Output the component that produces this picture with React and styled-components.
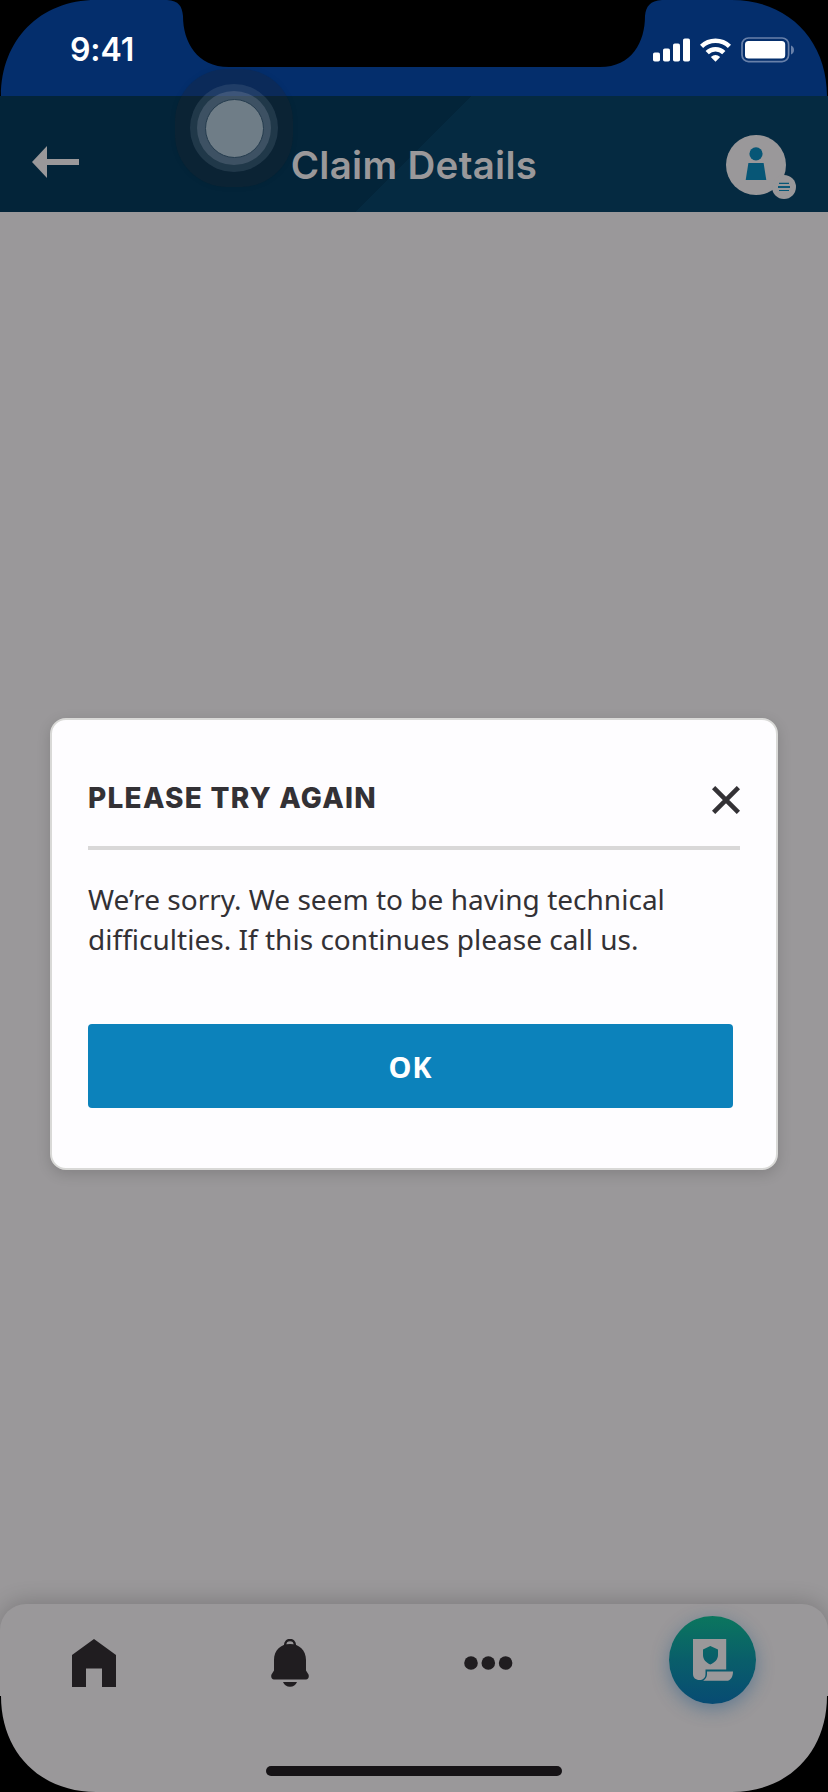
import React from "react";
import styled, { createGlobalStyle } from "styled-components";

const GlobalStyle = createGlobalStyle`
  *, *::before, *::after { box-sizing: border-box; }
  body { margin: 0; background: #000; }
  button { border: 0; padding: 0; background: none; font: inherit; cursor: pointer; }
  svg { display: block; }
`;

const dim = "#9a989a";
const ink = "#201d20";

const Screen = styled.div`
  position: relative;
  display: flex;
  flex-direction: column;
  width: 828px;
  height: 1792px;
  overflow: hidden;
  background: ${dim};
  font-family: "Noto Sans", sans-serif;
`;

const StatusBar = styled.div`
  display: flex;
  align-items: center;
  justify-content: space-between;
  height: 96px;
  padding: 3px 34px 0 70px;
  background: #042e6c;
  color: #fff;
`;

const Clock = styled.span`
  font-family: Inter, sans-serif;
  font-size: 32px;
  font-weight: 600;
  line-height: 40px;
  letter-spacing: -0.1px;
`;

const StatusIcons = styled.div`
  display: flex;
  align-items: center;
  gap: 10px;
`;

const Header = styled.header`
  display: grid;
  grid-template-columns: 1fr auto 1fr;
  align-items: center;
  height: 116px;
  padding: 18px 32px 0;
  background: linear-gradient(135deg, #032439 50%, #052a41 50%);
`;

const Title = styled.h1`
  margin: 4px 0 0;
  font-family: Inter, sans-serif;
  font-size: 38.5px;
  font-weight: 600;
  line-height: 46px;
  letter-spacing: 0.3px;
  color: ${dim};
`;

const BackButton = styled.button`
  justify-self: start;
  margin-bottom: 2px;
`;

const ProfileButton = styled.button`
  justify-self: end;
  margin-top: 8px;
`;

const Content = styled.main`
  flex: 1;
`;

const NavBar = styled.nav`
  display: flex;
  align-items: flex-start;
  height: 188px;
  padding: 12px 72px 0;
  border-radius: 26px 26px 0 0;
  background: ${dim};
  box-shadow: 0 -2px 22px rgba(0, 0, 0, 0.2);
`;

const NavItem = styled.button`
  display: flex;
  margin-top: ${(p) => p.$top || 23}px;
  margin-left: ${(p) => p.$gap || 0}px;
`;

const ClaimButton = styled.button`
  display: flex;
  align-items: center;
  justify-content: center;
  width: 88px;
  height: 88px;
  margin-left: 156px;
  border-radius: 50%;
  background: linear-gradient(#0b765e, #095e6a 50%, #074b73);
  box-shadow: 0 5px 18px rgba(20, 80, 130, 0.42);
`;

const Overlay = styled.div`
  position: absolute;
  inset: 0;
  display: flex;
  align-items: center;
  justify-content: center;
  padding-top: 96px;
`;

const Dialog = styled.section`
  display: flex;
  flex-direction: column;
  width: 728px;
  height: 452px;
  padding: 62px 36px 60px;
  border: 2px solid #d9d9d7;
  border-radius: 16px;
  background: #fefdff;
  box-shadow: 0 4px 14px rgba(0, 0, 0, 0.15);
  color: #333135;
`;

const DialogHeader = styled.div`
  display: flex;
  align-items: center;
  justify-content: space-between;
  height: 68px;
  padding-bottom: 28px;
  border-bottom: 4px solid #d9d8d8;
`;

const DialogTitle = styled.h2`
  margin: 0 0 4px;
  font-family: Inter, sans-serif;
  font-size: 28px;
  font-weight: 800;
  line-height: 32px;
  letter-spacing: 1.25px;
`;

const Message = styled.p`
  margin: 29px 0 0;
  font-size: 28px;
  line-height: 40px;
  letter-spacing: 0.02px;
  white-space: nowrap;
`;

const PrimaryButton = styled.button`
  width: 645px;
  height: 84px;
  margin-top: auto;
  border-radius: 4px;
  background: #0c82bb;
  color: #fff;
  font-size: 29px;
  font-weight: 700;
  letter-spacing: 1px;
`;

const TouchPad = styled.div`
  position: absolute;
  left: 175px;
  top: 69px;
  display: grid;
  place-items: center;
  width: 118px;
  height: 118px;
  border-radius: 52px;
  background: rgba(34, 31, 40, 0.28);
  box-shadow: 0 0 6px rgba(31, 29, 42, 0.06);
`;

const TouchRing = styled.div`
  display: grid;
  place-items: center;
  width: ${(p) => p.$size}px;
  height: ${(p) => p.$size}px;
  border-radius: 50%;
  background: ${(p) => p.$fill};
  border: ${(p) => p.$border || "0"};
`;

const HomeIndicator = styled.div`
  position: absolute;
  left: 266px;
  bottom: 16px;
  width: 296px;
  height: 10px;
  border-radius: 5px;
  background: #161316;
`;

const Bezel = styled.svg`
  position: absolute;
  inset: 0;
  pointer-events: none;
`;

const SignalIcon = () => (
  <svg width="37" height="24" fill="#fff">
    <rect x="0" y="14.5" width="7" height="9" rx="1.8" />
    <rect x="10" y="10.5" width="7" height="13" rx="1.8" />
    <rect x="20" y="5.5" width="7" height="18" rx="1.8" />
    <rect x="30" y="0.5" width="7" height="23" rx="1.8" />
  </svg>
);

const WifiIcon = () => (
  <svg width="31" height="24" viewBox="0 0 31 24" fill="none" stroke="#fff" strokeWidth="4.6">
    <path d="M1.5 8.4 A20 20 0 0 1 29.5 8.4" />
    <path d="M7.2 14.7 A11.8 11.8 0 0 1 23.8 14.7" />
    <path d="M10.8 18.9 Q15.5 15.2 20.2 18.9 L15.5 23.7 Z" fill="#fff" stroke="none" />
  </svg>
);

const BatteryIcon = () => (
  <svg width="53" height="26" viewBox="0 0 53 26">
    <rect x="1" y="1" width="46.6" height="23.6" rx="6.5" fill="none" stroke="#6880a9" strokeWidth="1.7" />
    <rect x="4" y="4" width="40.2" height="17.4" rx="3.5" fill="#fff" />
    <path d="M50 8.5 Q53 9.8 53 13 Q53 16.2 50 17.5 Z" fill="#6880a9" />
  </svg>
);

const BackIcon = () => (
  <svg width="47" height="32" fill={dim}>
    <path d="M0 16 L15 0 V13 H47 V19 H15 V32 Z" />
  </svg>
);

const ProfileIcon = () => (
  <svg width="70" height="64" viewBox="0 0 70 64">
    <circle cx="30" cy="30" r="30" fill={dim} />
    <circle cx="30" cy="18.8" r="6.6" fill="#075676" />
    <path d="M22.4 28 H37.6 L40.3 45 H19.7 Z" fill="#075676" />
    <circle cx="58" cy="52" r="12" fill={dim} />
    <path d="M53 48.3 H63 M53 55.5 H63" stroke="#075676" strokeWidth="1.2" />
    <path d="M52 52 H64" stroke="#075676" strokeWidth="1.9" />
  </svg>
);

const HomeIcon = () => (
  <svg width="44" height="48" fill={ink}>
    <path d="M22 0 L44 16 V48 H30 V29.5 H14 V48 H0 V16 Z" />
  </svg>
);

const BellIcon = () => (
  <svg width="38" height="48" viewBox="0 0 38 48">
    <path d="M14.2 8 V5.5 A4.8 4.6 0 0 1 23.8 5.5 V8" transform="translate(0 .1)" fill="none" stroke={ink} strokeWidth="2.4" />
    <path d="M3 21 C3 11 10 5 19 5 C28 5 35 11 35 21 V31.5 L37.5 35.5 C38.4 38 37.2 40.5 35 40.5 H3 C.8 40.5 -.4 38 .5 35.5 L3 31.5 Z" fill={ink} />
    <path d="M12 43 H26 Q24 47.8 19 47.8 Q14 47.8 12 43 Z" fill={ink} />
  </svg>
);

const MoreIcon = () => (
  <svg width="49" height="14" fill={ink}>
    <circle cx="7" cy="7" r="6.8" />
    <circle cx="24.3" cy="7" r="6.8" />
    <circle cx="41.6" cy="7" r="6.8" />
  </svg>
);

const ClaimIcon = () => (
  <svg width="40" height="42" viewBox="0 0 40 42" fill={dim}>
    <path
      fillRule="evenodd"
      d="M0 0 H33.2 V30.5 H12.5 V35 C12.5 39 9.8 41 6.5 41 C2.7 41 0 38.8 0 35 Z M17.3 7 L10 10.5 V16 C10 20.5 13 23.5 17.3 25.5 C21.8 23.5 25 20.5 25 16 V10.5 Z"
    />
    <path d="M14 32.5 H40 C40 38.2 37.5 41.8 33.5 41.8 H10.2 C12.8 40 14 37.8 14 35 Z" />
  </svg>
);

const CloseIcon = () => (
  <svg width="28" height="28" stroke="#333135" strokeWidth="4.6">
    <path d="M1.6 1.6 L26.4 26.4 M26.4 1.6 L1.6 26.4" />
  </svg>
);

export default function App() {
  return (
    <>
      <GlobalStyle />
      <Screen>
        <StatusBar>
          <Clock>9:41</Clock>
          <StatusIcons>
            <SignalIcon />
            <WifiIcon />
            <BatteryIcon />
          </StatusIcons>
        </StatusBar>
        <Header>
          <BackButton aria-label="Back"><BackIcon /></BackButton>
          <Title>Claim Details</Title>
          <ProfileButton aria-label="Profile"><ProfileIcon /></ProfileButton>
        </Header>
        <Content />
        <NavBar>
          <NavItem aria-label="Home"><HomeIcon /></NavItem>
          <NavItem aria-label="Notifications" $gap={155}><BellIcon /></NavItem>
          <NavItem aria-label="More" $gap={155} $top={40}><MoreIcon /></NavItem>
          <ClaimButton aria-label="Claims"><ClaimIcon /></ClaimButton>
        </NavBar>
        <Overlay>
          <Dialog role="dialog">
            <DialogHeader>
              <DialogTitle>PLEASE TRY AGAIN</DialogTitle>
              <button aria-label="Close"><CloseIcon /></button>
            </DialogHeader>
            <Message>
              We’re sorry. We seem to be having technical
              <br />
              difficulties. If this continues please call us.
            </Message>
            <PrimaryButton>OK</PrimaryButton>
          </Dialog>
        </Overlay>
        <TouchPad>
          <TouchRing $size={88} $fill="rgba(122, 138, 158, 0.2)">
            <TouchRing $size={74} $fill="rgba(140, 152, 170, 0.27)">
              <TouchRing $size={59} $fill="#6f7d87" $border="1.5px solid #253c4e" />
            </TouchRing>
          </TouchRing>
        </TouchPad>
        <HomeIndicator />
        <Bezel width="828" height="1792" viewBox="0 0 828 1792" fill="#000">
          <path d="M0 0 H96 C40 0 1 40 1 96 H0 Z" />
          <path d="M828 0 H732 C788 0 827 40 827 96 H828 Z" />
          <path d="M0 1792 H96 C40 1792 1 1752 1 1696 H0 Z" />
          <path d="M828 1792 H732 C788 1792 827 1752 827 1696 H828 Z" />
          <path d="M167 0 C179 1 182 6 183 16 C183 42 197 67 229 67 H600 C632 67 645 42 645 16 C646 6 650 1 662 0 Z" />
        </Bezel>
      </Screen>
    </>
  );
}
